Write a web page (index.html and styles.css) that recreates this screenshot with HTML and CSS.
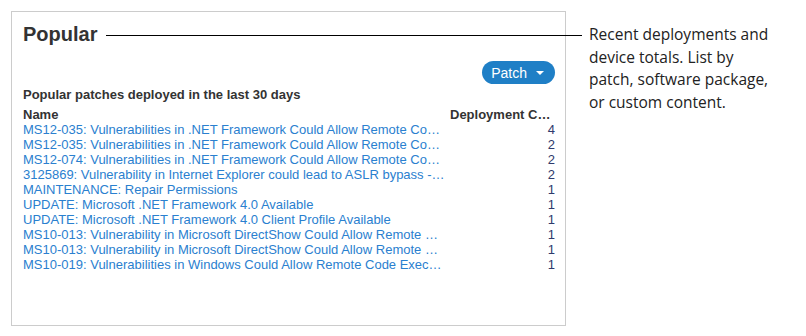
FILE: index.html
```html
<!DOCTYPE html>
<html lang="en">
<head>
    <meta charset="UTF-8">
    <title>Popular</title>
    <link rel="stylesheet" href="styles.css">
</head>
<body>
<div class="page">
    <div class="panel">
        <div class="panel-header">
            <h2>Popular</h2>
            <span class="leader"></span>
        </div>
        <div class="toolbar">
            <button class="pill-btn">Patch <span class="caret"></span></button>
        </div>
        <div class="subtitle">Popular patches deployed in the last 30 days</div>
        <div class="grid">
            <div class="th">Name</div>
            <div class="th">Deployment Count</div>

            <a class="name">MS12-035: Vulnerabilities in .NET Framework Could Allow Remote Code Execution</a>
            <div class="count">4</div>
            <a class="name">MS12-035: Vulnerabilities in .NET Framework Could Allow Remote Code Execution</a>
            <div class="count">2</div>
            <a class="name">MS12-074: Vulnerabilities in .NET Framework Could Allow Remote Code Execution</a>
            <div class="count">2</div>
            <a class="name">3125869: Vulnerability in Internet Explorer could lead to ASLR bypass - Windows</a>
            <div class="count">2</div>
            <a class="name">MAINTENANCE: Repair Permissions</a>
            <div class="count">1</div>
            <a class="name">UPDATE: Microsoft .NET Framework 4.0 Available</a>
            <div class="count">1</div>
            <a class="name">UPDATE: Microsoft .NET Framework 4.0 Client Profile Available</a>
            <div class="count">1</div>
            <a class="name">MS10-013: Vulnerability in Microsoft DirectShow Could Allow Remote Code Execution</a>
            <div class="count">1</div>
            <a class="name">MS10-013: Vulnerability in Microsoft DirectShow Could Allow Remote Code Execution</a>
            <div class="count">1</div>
            <a class="name">MS10-019: Vulnerabilities in Windows Could Allow Remote Code Execution</a>
            <div class="count">1</div>
        </div>
    </div>
    <p class="note">Recent deployments and device totals. List by patch, software package, or custom content.</p>
</div>
</body>
</html>
```

FILE: styles.css
```css
body {
    margin: 0;
    padding: 11px;
    background-color: #ffffff;
    font-family: "Liberation Sans", Arial, sans-serif;
    color: #333333;
}
.page {
    display: flex;
    align-items: flex-start;
}
.panel {
    box-sizing: border-box;
    width: 555px;
    height: 315px;
    border: 1px solid #cccccc;
    padding: 12px 10px 12px 11px;
    flex-shrink: 0;
}
.panel-header {
    display: flex;
    align-items: flex-start;
}
.panel-header h2 {
    margin: 0;
    font-size: 20px;
    line-height: 20px;
    font-weight: bold;
    color: #333333;
}
.leader {
    flex: 1;
    height: 1px;
    background-color: #000000;
    margin: 11px -27px 0 9px;
}
.toolbar {
    display: flex;
    justify-content: flex-end;
    margin-top: 17px;
}
.pill-btn {
    display: flex;
    align-items: center;
    gap: 9px;
    height: 23px;
    padding: 0 11px 0 9px;
    border: none;
    border-radius: 12px;
    background-color: #1f7fc6;
    color: #ffffff;
    font-family: "Liberation Sans", Arial, sans-serif;
    font-size: 14px;
    cursor: pointer;
}
.caret {
    width: 0;
    height: 0;
    border-left: 4px solid transparent;
    border-right: 4px solid transparent;
    border-top: 4px solid #ffffff;
}
.subtitle {
    margin-top: 3px;
    font-size: 13px;
    line-height: 15px;
    font-weight: bold;
}
.grid {
    display: grid;
    grid-template-columns: 1fr 105px;
    column-gap: 3px;
    margin-top: 5px;
    font-size: 13px;
    line-height: 15px;
}
.th {
    font-weight: bold;
    white-space: nowrap;
    overflow: hidden;
    text-overflow: ellipsis;
}
.name {
    color: #2a80cf;
    white-space: nowrap;
    overflow: hidden;
    text-overflow: ellipsis;
    cursor: pointer;
}
.count {
    color: #2f3a6c;
    text-align: right;
}
.note {
    margin: 12px 0 0 23px;
    width: 188px;
    font-family: "Open Sans", sans-serif;
    font-size: 15.5px;
    line-height: 22.5px;
    color: #222222;
}
```
